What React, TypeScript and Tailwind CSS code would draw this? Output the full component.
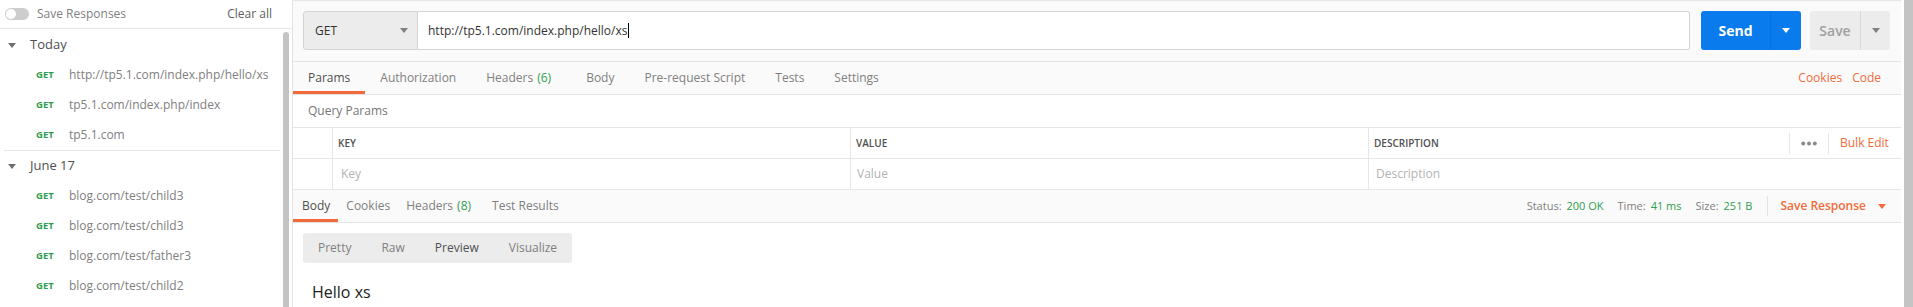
import React from 'react';

const ORANGE = 'text-[#f26b3a]';

const Caret = ({ className = '' }: { className?: string }) => (
  <svg width="8" height="5" viewBox="0 0 8 5" className={className}>
    <path d="M0 0h8L4 5z" fill="currentColor" />
  </svg>
);

const Dots = () => (
  <svg width="16" height="5" viewBox="0 0 16 5" className="text-[#8a8a8a]">
    <circle cx="2.2" cy="2.5" r="2" fill="currentColor" />
    <circle cx="8" cy="2.5" r="2" fill="currentColor" />
    <circle cx="13.8" cy="2.5" r="2" fill="currentColor" />
  </svg>
);

type HistoryItem = { method: string; url: string };

const today: HistoryItem[] = [
  { method: 'GET', url: 'http://tp5.1.com/index.php/hello/xs' },
  { method: 'GET', url: 'tp5.1.com/index.php/index' },
  { method: 'GET', url: 'tp5.1.com' },
];

const june17: HistoryItem[] = [
  { method: 'GET', url: 'blog.com/test/child3' },
  { method: 'GET', url: 'blog.com/test/child3' },
  { method: 'GET', url: 'blog.com/test/father3' },
  { method: 'GET', url: 'blog.com/test/child2' },
];

const HistoryGroup = ({ label, items, divided }: { label: string; items: HistoryItem[]; divided?: boolean }) => (
  <div className={divided ? 'border-t border-[#e6e6e6] ml-[4px] mr-[3px]' : 'pt-[1px]'}>
    <div className={`flex items-center h-[30px] ${divided ? 'pl-[4px]' : 'pl-[8px]'}`}>
      <Caret className="text-[#6f6f6f]" />
      <span className="ml-[14px] text-[13px] text-[#505050]">{label}</span>
    </div>
    {items.map((it, i) => (
      <div key={i} className={`flex items-center h-[30px] ${divided ? 'pl-[32px]' : 'pl-[36px]'}`}>
        <span className="w-[33px] text-[9.5px] font-bold text-[#2f9e50]">{it.method}</span>
        <span className="text-[12px] text-[#808080] whitespace-nowrap">{it.url}</span>
      </div>
    ))}
  </div>
);

const Sidebar = () => (
  <aside className="w-[293px] shrink-0 border-r border-[#e3e3e3] flex flex-col bg-white">
    <div className="h-[29px] shrink-0 border-b border-[#e6e6e6] flex items-center pl-[5px] pr-[20px]">
      <div className="w-[24px] h-[12px] rounded-full bg-[#cdcdcd] flex items-center p-[1px]">
        <div className="w-[10px] h-[10px] rounded-full bg-white" />
      </div>
      <span className="ml-[8px] text-[12px] text-[#808080]">Save Responses</span>
      <span className="ml-auto text-[12px] text-[#606060]">Clear all</span>
    </div>
    <div className="flex flex-1 min-h-0">
      <div className="w-[283px] shrink-0">
        <HistoryGroup label="Today" items={today} />
        <HistoryGroup label="June 17" items={june17} divided />
      </div>
      <div className="w-[6px] mt-[3px] rounded-t-full bg-[#c4c4c4]" />
    </div>
  </aside>
);

const requestTabs = ['Params', 'Authorization', 'Headers', 'Body', 'Pre-request Script', 'Tests', 'Settings'];

const RequestBar = () => (
  <div className="bg-[#fafafa] border-t border-[#e6e6e6]">
    <div className="flex items-center pl-[10px] pr-[11px] pt-[10px] pb-[11px] border-b border-[#e3e3e3]">
      <div className="w-[115px] h-[39px] flex items-center justify-between pl-[11px] pr-[9px] bg-[#ececec] border border-[#d4d4d4] rounded-l-[3px]">
        <span className="text-[12px] text-[#333]">GET</span>
        <Caret className="text-[#808080]" />
      </div>
      <div className="flex-1 h-[39px] flex items-center pl-[10px] bg-white border border-l-0 border-[#d4d4d4] rounded-r-[3px]">
        <span className="text-[12px] text-[#333]">http://tp5.1.com/index.php/hello/xs</span>
        <span className="w-px h-[15px] bg-black ml-[1px]" />
      </div>
      <div className="ml-[11px] w-[100px] h-[39px] flex rounded-[3px] bg-[#097bed] text-white">
        <span className="flex-1 flex items-center justify-center text-[14px] font-bold">Send</span>
        <span className="w-[31px] border-l border-[#0a6fd6] flex items-center justify-center">
          <Caret />
        </span>
      </div>
      <div className="ml-[9px] w-[80px] h-[39px] flex rounded-[3px] bg-[#ececec]">
        <span className="flex-1 flex items-center justify-center text-[14px] font-semibold text-[#a0a0a0]">Save</span>
        <span className="w-[30px] border-l border-[#d8d8d8] flex items-center justify-center text-[#808080]">
          <Caret />
        </span>
      </div>
    </div>
    <div className="h-[33px] flex items-center border-b border-[#e3e3e3]">
      {requestTabs.map((t, i) => (
        <div
          key={t}
          className={`h-full flex items-center px-[15px] text-[12px] ${
            i === 0 ? 'text-[#505050] shadow-[inset_0_-3px_0_#f26b3a]' : 'text-[#808080]'
          } ${t === 'Headers' ? 'pr-[20px]' : ''}`}
        >
          {t}
          {t === 'Headers' && <span className="ml-[4px] text-[#2f9e50]">(6)</span>}
        </div>
      ))}
      <div className={`ml-auto pr-[20px] flex gap-[10px] text-[12px] ${ORANGE}`}>
        <span>Cookies</span>
        <span>Code</span>
      </div>
    </div>
  </div>
);

const ParamsTable = () => (
  <div className="bg-white">
    <div className="h-[32px] flex items-center pl-[15px] text-[12px] text-[#767676]">Query Params</div>
    <div className="border-t border-[#e6e6e6]">
      <div className="grid grid-cols-[39px_518px_518px_419px_114px] h-[31px] border-b border-[#e6e6e6] text-[10px] font-semibold text-[#505050]">
        <div />
        <div className="border-l border-[#e6e6e6] flex items-center pl-[5px]">KEY</div>
        <div className="border-l border-[#e6e6e6] flex items-center pl-[5px]">VALUE</div>
        <div className="border-l border-[#e6e6e6] flex items-center pl-[5px]">DESCRIPTION</div>
        <div className="flex items-center">
          <span className="ml-[2px] w-px h-[21px] bg-[#e6e6e6]" />
          <span className="ml-[11px] flex items-center">
            <Dots />
          </span>
          <span className="ml-[11px] w-px h-[21px] bg-[#e6e6e6]" />
          <span className={`ml-[11px] text-[12px] font-normal ${ORANGE}`}>Bulk Edit</span>
        </div>
      </div>
      <div className="grid grid-cols-[39px_518px_518px_533px] h-[31px] border-b border-[#e6e6e6] text-[12px] text-[#b3b3b3]">
        <div />
        <div className="border-l border-[#e6e6e6] flex items-center pl-[8px]">Key</div>
        <div className="border-l border-[#e6e6e6] flex items-center pl-[6px]">Value</div>
        <div className="border-l border-[#e6e6e6] flex items-center pl-[7px]">Description</div>
      </div>
    </div>
  </div>
);

const responseTabs = ['Body', 'Cookies', 'Headers', 'Test Results'];

const ResponseBar = () => (
  <div className="h-[33px] flex items-center bg-[#fafafa] border-b border-[#e3e3e3]">
    {responseTabs.map((t, i) => (
      <div
        key={t}
        className={`h-full flex items-center px-[8px] text-[12px] ${
          i === 0 ? 'text-[#505050] shadow-[inset_0_-3px_0_#f26b3a] pl-[9px]' : 'text-[#808080]'
        } ${t === 'Headers' ? 'pr-[13px]' : ''}`}
      >
        {t}
        {t === 'Headers' && <span className="ml-[4px] text-[#2f9e50]">(8)</span>}
      </div>
    ))}
    <div className="ml-auto flex items-center text-[11px] text-[#808080]">
      <span>Status:</span>
      <span className="ml-[5px] text-[#2f9e50]">200 OK</span>
      <span className="ml-[14px]">Time:</span>
      <span className="ml-[5px] text-[#2f9e50]">41 ms</span>
      <span className="ml-[14px]">Size:</span>
      <span className="ml-[5px] text-[#2f9e50]">251 B</span>
      <span className="ml-[15px] w-px h-[20px] bg-[#e3e3e3]" />
      <span className={`ml-[12px] text-[12px] font-semibold ${ORANGE}`}>Save Response</span>
      <Caret className={`ml-[12px] mr-[15px] ${ORANGE}`} />
    </div>
  </div>
);

const ResponseBody = () => (
  <div className="bg-white pl-[10px]">
    <div className="mt-[10px] inline-flex h-[30px] items-center rounded-[3px] bg-[#ececec] text-[12px] text-[#808080]">
      <span className="px-[15px]">Pretty</span>
      <span className="px-[15px]">Raw</span>
      <span className="px-[15px] text-[#505050]">Preview</span>
      <span className="px-[15px]">Visualize</span>
    </div>
    <div className="mt-[18px] pl-[9px] text-[16px] leading-[22px] text-[#222]">Hello xs</div>
  </div>
);

export default function App() {
  return (
    <div className="w-[1913px] h-[307px] flex overflow-hidden bg-white font-['Open_Sans',sans-serif]">
      <Sidebar />
      <main className="w-[1608px] shrink-0 flex flex-col">
        <RequestBar />
        <ParamsTable />
        <ResponseBar />
        <ResponseBody />
      </main>
      <div className="ml-[3px] w-[9px] bg-[#c4c4c4]" />
    </div>
  );
}
